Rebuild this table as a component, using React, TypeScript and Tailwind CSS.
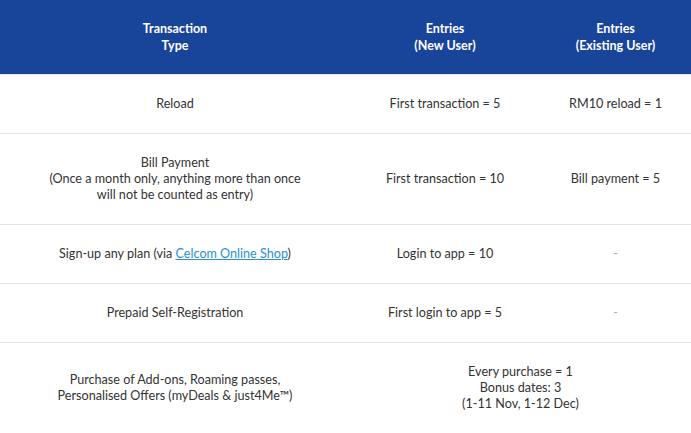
const rows: { type: React.ReactNode; newUser: React.ReactNode; existing?: React.ReactNode; merged?: boolean }[] = [
  { type: "Reload", newUser: "First transaction = 5", existing: "RM10 reload = 1" },
  {
    type: (
      <>
        Bill Payment
        <br />
        (Once a month only, anything more than once
        <br />
        will not be counted as entry)
      </>
    ),
    newUser: "First transaction = 10",
    existing: "Bill payment = 5",
  },
  {
    type: (
      <>
        Sign-up any plan (via{" "}
        <a href="#" className="text-[#2a8fcf] underline">
          Celcom Online Shop
        </a>
        )
      </>
    ),
    newUser: "Login to app = 10",
    existing: <span className="text-[#aaa]">-</span>,
  },
  {
    type: "Prepaid Self-Registration",
    newUser: "First login to app = 5",
    existing: <span className="text-[#aaa]">-</span>,
  },
  {
    type: (
      <>
        Purchase of Add-ons, Roaming passes,
        <br />
        Personalised Offers (myDeals &amp; just4Me™)
      </>
    ),
    newUser: (
      <>
        Every purchase = 1
        <br />
        Bonus dates: 3
        <br />
        (1-11 Nov, 1-12 Dec)
      </>
    ),
    merged: true,
  },
]

export default function App() {
  return (
    <div className="w-[691px] bg-white" style={{ fontFamily: "Lato, 'Open Sans', sans-serif" }}>
      <table className="w-[691px] table-fixed border-collapse text-center text-[12.6px] leading-4 text-[#333]">
        <colgroup>
          <col className="w-[350px]" />
          <col className="w-[190px]" />
          <col className="w-[151px]" />
        </colgroup>
        <thead>
          <tr className="bg-[#18449a] text-white border-b border-[#dfe6f1] text-[12.5px] leading-[17px]">
            <th className="h-[74px] font-bold">
              Transaction
              <br />
              Type
            </th>
            <th className="font-bold">
              Entries
              <br />
              (New User)
            </th>
            <th className="font-bold">
              Entries
              <br />
              (Existing User)
            </th>
          </tr>
        </thead>
        <tbody>
          {rows.map((r, i) => (
            <tr key={i} className="border-b border-[#e3e3e3] last:border-b-0">
              <td className="py-[21px] px-2">{r.type}</td>
              {r.merged ? (
                <td colSpan={2} className="py-[21px] px-2">
                  {r.newUser}
                </td>
              ) : (
                <>
                  <td className="py-[21px] px-2">{r.newUser}</td>
                  <td className="py-[21px] px-2">{r.existing}</td>
                </>
              )}
            </tr>
          ))}
        </tbody>
      </table>
    </div>
  )
}
